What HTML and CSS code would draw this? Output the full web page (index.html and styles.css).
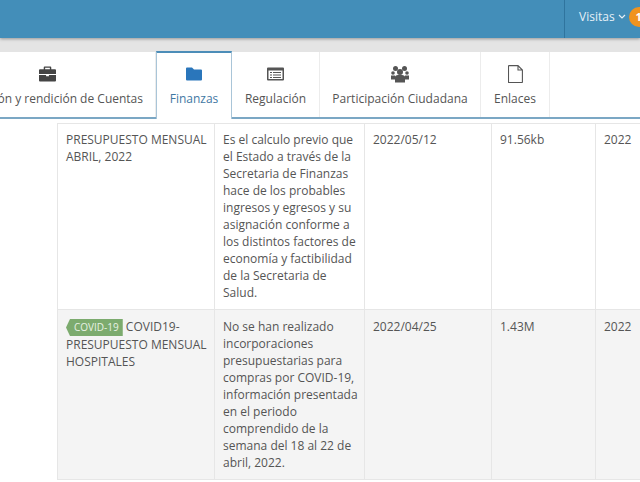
FILE: index.html
```html
<!DOCTYPE html>
<html lang="es">
<head>
    <meta charset="utf-8">
    <title>Finanzas</title>
    <link rel="stylesheet" href="styles.css">
</head>
<body>
    <header class="topbar">
        <div class="visitas">
            <span>Visitas</span>
            <svg class="chevron" viewBox="0 0 8 6" width="8" height="6"><path d="M1 1l3 3 3-3" fill="none" stroke="#e6f0f7" stroke-width="1.2"/></svg>
            <span class="badge">1</span>
        </div>
    </header>
    <nav class="tabs">
        <a class="tab tab-cuentas">
            <svg class="tab-icon" viewBox="0 0 18 16" width="17" height="18"><path fill="#444" d="M6 0h6a1 1 0 0 1 1 1v2h4a1 1 0 0 1 1 1v4H0V4a1 1 0 0 1 1-1h4V1a1 1 0 0 1 1-1zm.5 1.500V3h5V1.500zM0 9h7.500v1.500h3V9H18v6a1 1 0 0 1-1 1H1a1 1 0 0 1-1-1z"/></svg>
            <span class="tab-text">ón y rendición de Cuentas</span>
        </a>
        <a class="tab tab-finanzas active">
            <svg class="tab-icon" viewBox="0 0 16 13" width="16" height="18"><path fill="#2a76bb" d="M1 0h5l2 2h7a1 1 0 0 1 1 1v9a1 1 0 0 1-1 1H1a1 1 0 0 1-1-1V1a1 1 0 0 1 1-1z"/></svg>
            <span class="tab-text">Finanzas</span>
        </a>
        <a class="tab tab-regulacion">
            <svg class="tab-icon" viewBox="0 0 17 13" width="17" height="18"><path fill="#555" fill-rule="evenodd" d="M1 0h15a1 1 0 0 1 1 1v11a1 1 0 0 1-1 1H1a1 1 0 0 1-1-1V1a1 1 0 0 1 1-1zm.5 3v8.500h14V3zM3 4.500h2v1H3zm3 0h8v1H6zM3 7h2v1H3zm3 0h8v1H6zM3 9.500h2v1H3zm3 0h8v1H6z"/></svg>
            <span class="tab-text">Regulación</span>
        </a>
        <a class="tab tab-participacion">
            <svg class="tab-icon" viewBox="0 0 18 17" width="18" height="18"><g fill="#555"><circle cx="4.500" cy="3" r="2.500"/><circle cx="13.500" cy="3" r="2.500"/><circle cx="9" cy="6.500" r="3"/><circle cx="2" cy="7.500" r="1.800"/><circle cx="16" cy="7.500" r="1.800"/><path d="M0 10h4v4H0zM14 10h4v4h-4zM4 11a3 2 0 0 1 3-1.500h4A3 2 0 0 1 14 11v6H4z"/></g></svg>
            <span class="tab-text">Participación Ciudadana</span>
        </a>
        <a class="tab tab-enlaces">
            <svg class="tab-icon" viewBox="0 0 15 18" width="15" height="18"><path fill="none" stroke="#555" stroke-width="1.100" d="M1 .6h9l4.400 4.400v12a.5.5 0 0 1-.5.5H1a.5.5 0 0 1-.5-.5V1a.5.5 0 0 1 .5-.4zM10 .6V5h4.400"/></svg>
            <span class="tab-text">Enlaces</span>
        </a>
    </nav>
    <main class="table-wrap">
        <table class="docs">
            <colgroup>
                <col class="col-name"><col class="col-desc"><col class="col-date"><col class="col-size"><col class="col-year">
            </colgroup>
            <tr class="first">
                <td>PRESUPUESTO MENSUAL ABRIL, 2022</td>
                <td>Es el calculo previo que el Estado a través de la Secretaria de Finanzas hace de los probables ingresos y egresos y su asignación conforme a los distintos factores de economía y factibilidad de la Secretaria de Salud.</td>
                <td>2022/05/12</td>
                <td>91.56kb</td>
                <td>2022</td>
            </tr>
            <tr class="shaded">
                <td><span class="tag">COVID-19</span> COVID19-PRESUPUESTO MENSUAL HOSPITALES</td>
                <td>No se han realizado incorporaciones presupuestarias para compras por COVID-19, información presentada en el periodo comprendido de la semana del 18 al 22 de abril, 2022.</td>
                <td>2022/04/25</td>
                <td>1.43M</td>
                <td>2022</td>
            </tr>
        </table>
    </main>
</body>
</html>
```
FILE: styles.css
```css
html, body {
    margin: 0;
    padding: 0;
}
body {
    width: 640px;
    height: 482px;
    overflow: hidden;
    background-color: #fff;
    color: #555;
    font-family: "Open Sans", sans-serif;
    font-size: 12px;
}
.topbar {
    height: 38px;
    background-color: #438eb9;
    box-shadow: 0 1px 3px rgba(0, 0, 0, 0.35);
    display: flex;
    justify-content: flex-end;
    position: relative;
}
.visitas {
    width: 76px;
    box-sizing: border-box;
    border-left: 1px solid #2f749e;
    padding: 0 0 5px 14px;
    display: flex;
    align-items: center;
    gap: 3px;
    color: #e6f0f7;
    white-space: nowrap;
}
.chevron {
    flex: none;
}
.badge {
    flex: none;
    width: 20px;
    height: 20px;
    border-radius: 50%;
    background-color: #f0931e;
    color: #fff;
    font-weight: 700;
    font-size: 11px;
    text-align: center;
    line-height: 20px;
}
.tabs {
    border-top: 14px solid #e4e4e4;
    border-bottom: 2px solid #7ba7c4;
    display: flex;
}
.tab {
    height: 65px;
    box-sizing: border-box;
    background-color: #fff;
    border-right: 1px solid #ececec;
    display: flex;
    flex-direction: column;
    align-items: center;
    flex: none;
    color: #555;
    white-space: nowrap;
}
.tab-icon {
    flex: none;
    margin-top: 13px;
}
.tab-text {
    margin-top: 7px;
    line-height: 17px;
}
.tab-cuentas { width: 156px; align-items: flex-end; padding-right: 12px; }
.tab-cuentas .tab-icon { margin-right: 87px; }
.tab-finanzas { width: 76px; }
.tab-regulacion { width: 88px; }
.tab-participacion { width: 161px; }
.tab-enlaces { width: 69px; }
.tab.active {
    height: 68px;
    margin: -1px 0 -2px;
    border-top: 2px solid #4c8db8;
    border-left: 1px solid #a9c5d8;
    border-right: 1px solid #a9c5d8;
    color: #3f78a3;
}
.tab.active .tab-icon {
    margin-top: 12px;
}
.table-wrap {
    padding: 4px 0 0 57px;
}
.docs {
    width: 600px;
    table-layout: fixed;
    border-collapse: collapse;
    line-height: 17px;
}
.col-name { width: 157px; }
.col-desc { width: 150px; }
.col-date { width: 127px; }
.col-size { width: 104px; }
.col-year { width: 62px; }
.docs td {
    vertical-align: top;
    padding: 8px 5px 8px 8px;
    border: 1px solid #e6e6e6;
}
.docs .first td {
    padding-top: 7px;
}
.shaded td {
    background-color: #f4f4f4;
}
.tag {
    display: inline-block;
    background-color: #7cab6e;
    color: #e8f2e4;
    font-size: 10px;
    line-height: 17px;
    padding: 0 4px 0 8px;
    clip-path: polygon(4px 0, 100% 0, 100% 100%, 4px 100%, 0 50%);
}
```
